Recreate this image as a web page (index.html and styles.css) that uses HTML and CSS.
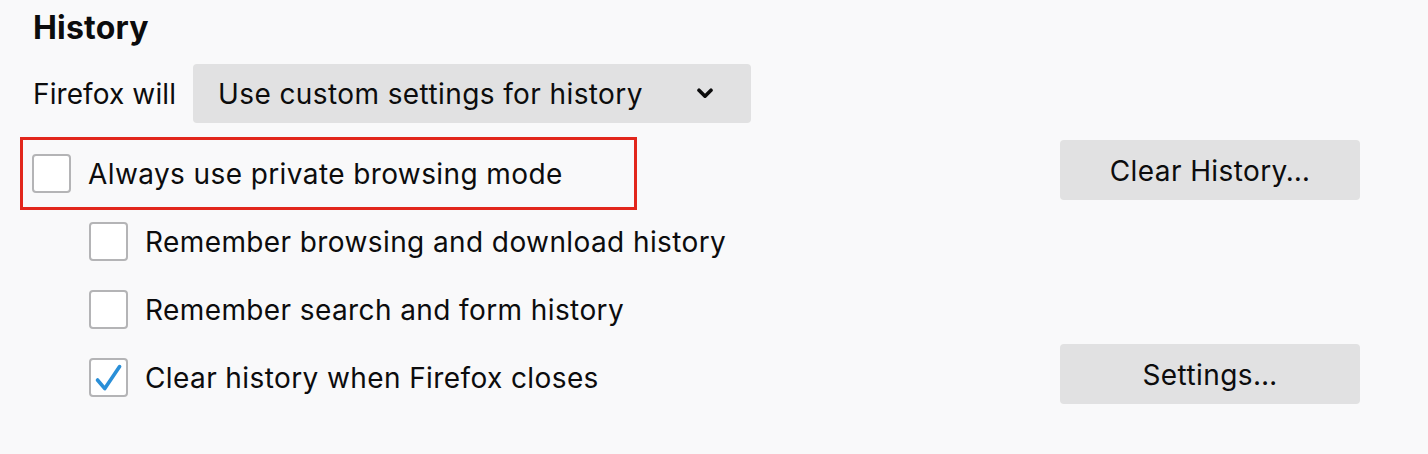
FILE: index.html
```html
<!DOCTYPE html>
<html lang="en">
<head>
<meta charset="utf-8">
<title>History</title>
<link rel="stylesheet" href="styles.css">
</head>
<body>
<section class="history">
  <h2 class="title">History</h2>
  <div class="mode-row">
    <span class="mode-label">Firefox will</span>
    <div class="select">
      <span class="select-text">Use custom settings for history</span>
      <svg class="chevron" width="16" height="11" viewBox="0 0 16 11" aria-hidden="true">
        <path d="M2 2.2 L8 8.2 L14 2.2" fill="none" stroke="#0c0c0d" stroke-width="3.6" stroke-linecap="round" stroke-linejoin="round"/>
      </svg>
    </div>
  </div>
  <div class="history-body">
    <div class="options">
      <label class="option option-highlight">
        <span class="checkbox"></span>
        <span class="option-text">Always use private browsing mode</span>
      </label>
      <div class="sub-options">
        <label class="option">
          <span class="checkbox"></span>
          <span class="option-text">Remember browsing and download history</span>
        </label>
        <label class="option">
          <span class="checkbox"></span>
          <span class="option-text">Remember search and form history</span>
        </label>
        <label class="option">
          <span class="checkbox checked">
            <svg width="35" height="35" viewBox="0 0 35 35" aria-hidden="true">
              <path d="M6.5 20 L13.8 28.6 L28.6 6.6" fill="none" stroke="#2a8fd8" stroke-width="3.6" stroke-linecap="round" stroke-linejoin="round"/>
            </svg>
          </span>
          <span class="option-text">Clear history when Firefox closes</span>
        </label>
      </div>
    </div>
    <div class="actions">
      <button class="btn" type="button">Clear History…</button>
      <button class="btn" type="button">Settings…</button>
    </div>
  </div>
</section>
</body>
</html>
```

FILE: styles.css
```css
html, body {
  margin: 0;
  padding: 0;
  background: #f9f9fa;
}

body {
  font-family: Inter, "Liberation Sans", sans-serif;
  color: #0c0c0d;
  font-size: 28px;
  letter-spacing: 0.4px;
}

.history {
  padding: 8px 68px 0 33px;
}

.title {
  margin: 0;
  font-size: 32px;
  font-weight: 700;
  line-height: 40px;
  letter-spacing: 0.2px;
}

.mode-row {
  display: flex;
  align-items: center;
  gap: 17px;
  margin-top: 16px;
}

.mode-label {
  padding-top: 3px;
  line-height: 1.2;
  letter-spacing: 0.1px;
}

.select {
  display: flex;
  align-items: center;
  justify-content: space-between;
  box-sizing: border-box;
  width: 558px;
  height: 59px;
  padding: 3px 38px 0 25px;
  background: #e1e1e2;
  border-radius: 4px;
}

.select-text {
  line-height: 1.2;
}

.chevron {
  display: block;
  margin-top: -3px;
}

.history-body {
  display: flex;
  justify-content: space-between;
  margin-top: 14px;
}

.options {
  display: flex;
  flex-direction: column;
}

.option {
  display: flex;
  align-items: center;
  gap: 17px;
}

.option-highlight {
  width: 617px;
  box-sizing: border-box;
  margin-left: -13px;
  padding: 14px 9px 14px 9px;
  border: 3px solid #e2261c;
}

.sub-options {
  display: flex;
  flex-direction: column;
  gap: 29px;
  margin-top: 12px;
  padding-left: 56px;
}

.checkbox {
  display: flex;
  align-items: center;
  justify-content: center;
  box-sizing: border-box;
  width: 39px;
  height: 39px;
  flex: none;
  background: #ffffff;
  border: 2px solid #b4b4b6;
  border-radius: 4px;
}

.checkbox svg {
  display: block;
}

.option-text {
  padding-top: 3px;
  line-height: 1.2;
  white-space: nowrap;
}

.actions {
  display: flex;
  flex-direction: column;
  gap: 144px;
  margin-top: 3px;
}

.btn {
  width: 300px;
  height: 60px;
  padding: 3px 0 0;
  border: none;
  border-radius: 4px;
  background: #e1e1e2;
  color: #0c0c0d;
  font-family: inherit;
  font-size: 28px;
  letter-spacing: 0.4px;
  line-height: 1.2;
}
```
